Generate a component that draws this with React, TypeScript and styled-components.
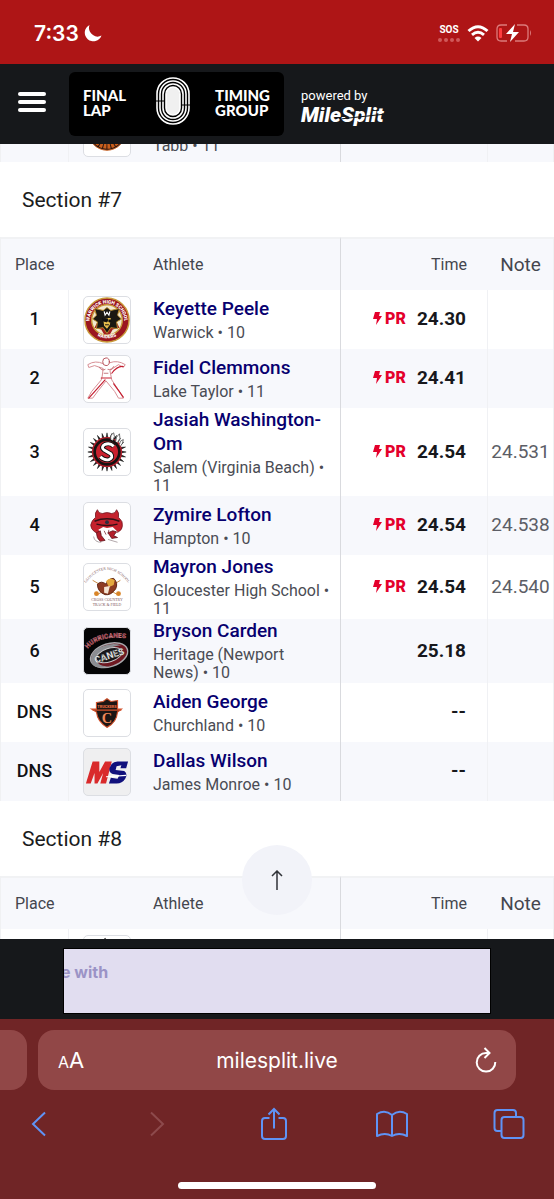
import React from "react";
import styled, { createGlobalStyle, css } from "styled-components";

const GlobalStyle = createGlobalStyle`
  *, *::before, *::after { box-sizing: border-box; }
  body { margin: 0; background: #fff; font-family: Roboto, "Liberation Sans", sans-serif; color: #1b1c20; }
  button { font: inherit; border: 0; padding: 0; background: none; color: inherit; }
`;

const Screen = styled.div`
  display: flex;
  flex-direction: column;
  height: 100vh;
  overflow: hidden;
`;

const StatusBar = styled.div`
  flex: none;
  display: flex;
  align-items: center;
  justify-content: space-between;
  height: 64px;
  padding: 2px 22px 0 34px;
  background: #ae1516;
  color: #fff;
  font-family: Inter, sans-serif;
`;

const Clock = styled.div`
  display: flex;
  align-items: center;
  gap: 5px;
  font-size: 21px;
  font-weight: 600;
`;

const Indicators = styled.div`
  display: flex;
  align-items: center;
  gap: 7px;
`;

const Sos = styled.div`
  display: flex;
  flex-direction: column;
  align-items: center;
  gap: 3px;
  font: 700 10px/10px Roboto, sans-serif;
`;

const Dots = styled.div`
  display: flex;
  gap: 2px;
`;

const Dot = styled.span`
  width: 4px;
  height: 4px;
  border-radius: 2px;
  background: #d0595a;
`;

const Header = styled.header`
  flex: none;
  display: flex;
  align-items: center;
  height: 80px;
  padding: 0 18px;
  background: #16181b;
  color: #fff;
`;

const MenuButton = styled.button`
  display: flex;
  flex-direction: column;
  gap: 4px;
  width: 28px;
  margin-right: 23px;
  padding-bottom: 4px;
`;

const MenuLine = styled.span`
  height: 4px;
  border-radius: 2px;
  background: #fff;
`;

const Brand = styled.a`
  display: flex;
  align-items: center;
  justify-content: space-between;
  width: 215px;
  height: 64px;
  padding: 0 14px;
  border-radius: 6px;
  background: #000;
  color: #fff;
  font: 900 15px/15px Lato, sans-serif;
  text-decoration: none;
`;

const BrandWord = styled.span`
  padding-bottom: 2px;
`;

const TrackSvg = styled.svg`
  margin: 0 0 6px 4px;
`;

const Powered = styled.a`
  margin-left: 17px;
  padding-top: 6px;
  color: #fff;
  font-size: 13px;
  line-height: 16px;
  text-decoration: none;
`;

const MileSplit = styled.span`
  display: block;
  position: relative;
  font-size: 21px;
  line-height: 22px;
  font-weight: 900;
  font-style: italic;

  &::after {
    content: "";
    position: absolute;
    left: 41px;
    right: 0;
    top: 12px;
    height: 1px;
    background: #16181b;
    transform: rotate(-6deg);
  }
`;

const Viewport = styled.main`
  position: relative;
  flex: 1;
  min-height: 0;
  overflow: hidden;
`;

const Scrolled = styled.div`
  margin-top: -41px;
`;

const SectionTitle = styled.h2`
  display: flex;
  align-items: center;
  height: 75px;
  margin: 0;
  padding-left: 22px;
  font-size: 21px;
  font-weight: 400;
`;

const Table = styled.table`
  width: 100%;
  table-layout: fixed;
  border-collapse: separate;
  border-spacing: 0;
  border-left: 1px solid #f0f1f3;
  border-right: 1px solid #f0f1f3;
`;

const Col = styled.col<{ $w?: number }>`
  ${(p) => p.$w && css`width: ${p.$w}px;`}
`;

const HeadCell = styled.th<{ $kind?: "time" | "note" | "place" }>`
  height: 53px;
  padding: 0;
  border-top: 2px solid #f1f2f4;
  background: #f7f8fc;
  color: #44464e;
  font-size: 16px;
  font-weight: 400;
  text-align: left;
  ${(p) => p.$kind === "place" && css`padding-left: 14px;`}
  ${(p) => p.$kind === "time" && css`text-align: right; padding-right: 21px; border-left: 1px solid #d9dade;`}
  ${(p) => p.$kind === "note" && css`text-align: center; font-size: 19px;`}
`;

const Row = styled.tr<{ $shade: boolean }>`
  background: ${(p) => (p.$shade ? "#f7f8fc" : "#fff")};
`;

const Cell = styled.td`
  height: 59px;
  padding: 0 0 2px;
  vertical-align: middle;
`;

const PlaceCell = styled(Cell)`
  border-right: 1px solid #f0f1f4;
  color: #101114;
  font-size: 18px;
  font-weight: 500;
  text-align: center;
`;

const LogoCell = styled(Cell)`
  padding: 0 0 0 14px;
`;

const AthleteCell = styled(Cell)`
  padding: 0 8px 0 0;
`;

const Athlete = styled.a`
  display: block;
  color: #07006f;
  font-size: 19px;
  line-height: 24px;
  font-weight: 500;
  text-decoration: none;
`;

const School = styled.div`
  padding: 3px 0 1px;
  color: #4a4c54;
  font-size: 16px;
  line-height: 18px;
`;

const TimeCell = styled(Cell)`
  padding-right: 21px;
  border-left: 1px solid #d9dade;
  border-right: 1px solid #f0f1f4;
  color: #17181c;
  font-size: 19px;
  font-weight: 700;
  text-align: right;
`;

const Result = styled.div`
  display: flex;
  align-items: center;
  justify-content: flex-end;
  gap: 11px;
`;

const Badge = styled.span`
  display: flex;
  align-items: center;
  gap: 3px;
  color: #e4002b;
  font-size: 16px;
  font-weight: 900;
`;

const NoteCell = styled(Cell)`
  color: #5c5e66;
  font-size: 19px;
  text-align: center;
`;

const LogoFrame = styled.div<{ $bg?: string }>`
  width: 48px;
  height: 48px;
  overflow: hidden;
  border: 1px solid #dcdee3;
  border-radius: 5px;
  background: ${(p) => p.$bg || "#fff"};

  svg { display: block; width: 100%; height: 100%; }
`;

const TopButton = styled.button`
  position: absolute;
  bottom: 24px;
  left: calc(50% - 35px);
  display: flex;
  align-items: center;
  justify-content: center;
  width: 70px;
  height: 70px;
  border-radius: 35px;
  background: #f2f3f9;
`;

const AdBar = styled.aside`
  flex: none;
  padding: 10px 64px 6px;
  background: #16181b;
`;

const Ad = styled.div`
  height: 64px;
  overflow: hidden;
  outline: 1px solid #000;
  background: #e1ddf0;
  color: #9b93c6;
  font: 700 16px/46px Inter, sans-serif;
  text-indent: -3px;
`;

const Browser = styled.footer`
  flex: none;
  display: flex;
  flex-direction: column;
  height: 180px;
  padding-top: 11px;
  background: #702526;
`;

const Tabs = styled.div`
  display: flex;
  gap: 11px;
  height: 60px;
  padding-right: 38px;
`;

const PreviousTab = styled.button`
  width: 27px;
  border-radius: 0 16px 16px 0;
  background: #914747;
`;

const Address = styled.div`
  flex: 1;
  display: flex;
  align-items: center;
  padding: 0 8px 0 20px;
  border-radius: 16px;
  background: #914747;
  color: #fff;
  font-family: Inter, sans-serif;
`;

const TextSize = styled.button`
  display: flex;
  align-items: baseline;
  width: 32px;
  font-size: 22px;
`;

const SmallA = styled.span`
  font-size: 16px;
`;

const Url = styled.input`
  flex: 1;
  min-width: 0;
  padding: 0;
  border: 0;
  outline: 0;
  background: none;
  color: #fff;
  font: 400 21px Inter, sans-serif;
  text-align: center;
`;

const Tools = styled.nav`
  display: flex;
  justify-content: space-between;
  padding: 12px 23px 0 17px;
`;

const Tool = styled.button`
  display: flex;
  align-items: center;
  justify-content: center;
  width: 44px;
  height: 44px;
  color: #5f93f5;

  &:disabled { color: #8d4a4c; }
`;

const HomeBar = styled.div`
  align-self: center;
  width: 198px;
  height: 7px;
  margin: auto 0 10px;
  border-radius: 4px;
  background: #fff;
`;

/* School crests, each on a 48 by 48 canvas */

function Warwick() {
  return (
    <svg viewBox="0 0 48 48" aria-hidden="true">
      <defs>
        <path id="warwick-top" d="M8 33A18 18 0 1 1 40 33" />
        <path id="warwick-bottom" d="M10 38A22 22 0 0 0 38 38" />
      </defs>
      <circle cx="24" cy="24" r="23" fill="#9b1620" stroke="#c99a3a" strokeWidth="1.500" />
      <circle cx="24" cy="24" r="16" fill="#f2ead2" stroke="#c99a3a" strokeWidth="1.500" />
      <path d="M12 15h24l-3 9 4 8-7 2-3 5h-6l-3-5-7-2 4-8z" fill="#a3211f" />
      <path d="M24 11l4 3 9-2-2 7 4 4-5 3 1 7-7-1-4 6-4-6-7 1 1-7-5-3 4-4-2-7 9 2z" fill="#1b1812" stroke="#b98a2e" strokeWidth="1" />
      <path d="M20 22h8l-1 7-3 4-3-3z" fill="#e9bf4d" />
      <path d="M19 22l6 1-1 3-4-1zM26 24h2v2h-2zM22 29h4" fill="#111" stroke="#111" />
      <path d="M21 15l1 4 2-3 2 3 1-4" fill="none" stroke="#fff" strokeWidth="1.200" />
      <text fill="#fff" fontFamily="Roboto" fontWeight="900" fontSize="5"><textPath href="#warwick-top" startOffset="50%" textAnchor="middle">WARWICK HIGH SCHOOL</textPath></text>
      <text fill="#fff" fontFamily="Roboto" fontWeight="900" fontSize="5"><textPath href="#warwick-bottom" startOffset="50%" textAnchor="middle">RAIDERS</textPath></text>
    </svg>
  );
}

function LakeTaylor() {
  return (
    <svg viewBox="0 0 48 48" aria-hidden="true" fill="none" strokeLinejoin="round" strokeLinecap="round">
      <path d="M20 8Q12 4 4 9l1 3 6-2 9 3-1 8-1 4L8 37l-4 7h5l6-8 8-10 9 11 4 7h5l-4-7-8-12-2-10 9-6 5 3 2-3q-8-5-16-2l-4 1" stroke="#d58b91" strokeWidth="1" />
      <path d="M29 18q6-8 12-7M22 25Q14 34 5 44M31 29l10 14M18 23h10" stroke="#c51f31" strokeWidth="1.200" />
      <ellipse cx="23" cy="6" rx="3.500" ry="4" fill="#fff" stroke="#b6525b" />
      <path d="M16 12q3 4 6 2M25 14q4 1 6-3M21 18h4" stroke="#b6525b" strokeWidth=".8" />
    </svg>
  );
}

function Salem() {
  const spikes = Array.from({ length: 24 }, (_, i) => i * 15);
  return (
    <svg viewBox="0 0 48 48" aria-hidden="true">
      {spikes.map((a) => (
        <path key={a} d="M22.800 10L24 4l1.200 6z" fill="#111" stroke="#111" strokeWidth=".5" transform={`rotate(${a} 24 24)`} />
      ))}
      <circle cx="24" cy="24" r="15" fill="#161212" stroke="#b51f2c" strokeWidth="1.500" />
      <circle cx="24" cy="24" r="11.500" fill="#c9202e" />
      <path d="M31 18q-4-4-9-2-5 3-1 6l7 4q3 4-2 6-5 1-9-3" fill="none" stroke="#111" strokeWidth="5" />
      <path d="M31 18q-4-4-9-2-5 3-1 6l7 4q3 4-2 6-5 1-9-3" fill="none" stroke="#fff" strokeWidth="3" />
      <path d="M28 11q-1-5 3-7 2 4-1 8M33 13q0-5 4-8 2 5-2 9M37 16q0-4 4-5 0 4-3 7" fill="#fff" stroke="#444" strokeWidth=".8" />
    </svg>
  );
}

function Hampton() {
  return (
    <svg viewBox="0 0 48 48" aria-hidden="true">
      <path d="M12 15q-1-5 2-8 1 4 5 4 5-2 10 0 4 0 5-4 3 3 2 8 5 4 4 9 0 4-4 6-5 3-9 1-5-2-8 1-5 1-8-2-4-3-4-7 1-5 5-8z" fill="#c4222d" stroke="#6e1620" strokeWidth=".8" />
      <path d="M11 19q13-5 26 0M13 22q11 3 22 0" fill="none" stroke="#2e1116" strokeWidth="1.500" />
      <path d="M15 28l5-3 4 1 6-1 5 5-4 4-6-2-5 3z" fill="#fff" />
      <path d="M13 31l4-2 1 5 4 5-5 1q-4-3-4-9zM25 31l5-2 4 1-3 4 4 2-6 1z" fill="#b31f2b" stroke="#5c141c" strokeWidth=".8" />
      <path d="M21 29l2 4M26 28l-1 4" stroke="#7c2a33" strokeWidth=".8" />
      <circle cx="24" cy="20" r="2" fill="#2b3040" />
      <path d="M10 35q1 6 8 6M25 38l10 3" fill="none" stroke="#9a8d91" strokeWidth=".8" />
    </svg>
  );
}

function Gloucester() {
  return (
    <svg viewBox="0 0 48 48" aria-hidden="true">
      <defs><path id="gloucester-arc" d="M1 21Q24-9 47 21" /></defs>
      <text fill="#7b5357" fontFamily="Liberation Serif" fontSize="4"><textPath href="#gloucester-arc" startOffset="50%" textAnchor="middle">GLOUCESTER HIGH SCHOOL</textPath></text>
      <path d="M9 17l26 15M38 17L14 32" stroke="#c98b45" strokeWidth="1" />
      <path d="M14 21q4-4 9 0 2-6 8-6 5 5 2 11-5 7-11 6-8-3-8-11z" fill="#8e3c22" stroke="#5f2412" />
      <path d="M23 18q4-5 9-1l-1 5-5 2z" fill="#e4a93f" />
      <path d="M21 24l6-1-2 8-4-1z" fill="#f5e4d2" />
      <circle cx="13" cy="31" r="2.500" fill="#d98427" /><circle cx="36" cy="31" r="2.500" fill="#d98427" />
      <text x="24" y="39" textAnchor="middle" fill="#7b5357" fontFamily="Liberation Serif" fontSize="4">CROSS COUNTRY</text>
      <text x="24" y="44" textAnchor="middle" fill="#7b5357" fontFamily="Liberation Serif" fontSize="4">TRACK &amp; FIELD</text>
    </svg>
  );
}

function Heritage() {
  return (
    <svg viewBox="0 0 48 48" aria-hidden="true">
      <g transform="rotate(-18 24 28)">
        <ellipse cx="26" cy="29" rx="20" ry="12" fill="#6f1922" stroke="#a9a9ad" strokeWidth="1.500" />
        <path d="M6 30Q8 18 24 18q10 0 17 5-10-2-20 0-9 2-9 8 0 7 12 9Q7 40 6 30z" fill="#8b8d92" />
        <ellipse cx="26" cy="29" rx="14" ry="7" fill="#17171a" stroke="#c9c9cc" />
        <text x="26" y="33" textAnchor="middle" fill="#eee" stroke="#333" strokeWidth=".3" fontFamily="Roboto" fontWeight="900" fontSize="10">CANES</text>
      </g>
      <path id="heritage-arc" d="M4 22Q15 7 46 11" fill="none" />
      <text fill="#a33a46" stroke="#d9a9ae" strokeWidth=".2" fontFamily="Roboto" fontWeight="900" fontSize="7"><textPath href="#heritage-arc">HURRICANES</textPath></text>
    </svg>
  );
}

function Churchland() {
  return (
    <svg viewBox="0 0 48 48" aria-hidden="true">
      <path d="M13 13l7-1 4-3 4 3 7-1v9h4l-4 3q-1 11-11 16Q14 33 13 23l-5-3h5z" fill="#1c1614" stroke="#d1502a" strokeWidth="1.200" />
      <path d="M9 21h30" stroke="#d1502a" strokeWidth="1.500" />
      <text x="24" y="18.500" textAnchor="middle" fill="#e0673f" fontFamily="Roboto" fontWeight="900" fontSize="4">TRUCKERS</text>
      <text x="24" y="34" textAnchor="middle" fill="#ee8858" fontFamily="Liberation Serif" fontWeight="700" fontSize="15">C</text>
    </svg>
  );
}

function JamesMonroe() {
  return (
    <svg viewBox="0 0 48 48" aria-hidden="true">
      <path d="M2 36L9 13h7l0 11 6-11h7l-6 23h-6l3-11-6 11h-3l0-11-4 11z" fill="#d92a2b" />
      <path d="M46 13l-2 7h-6l1-3-5 1-1 4 9 1q4 3 1 8-3 5-9 5h-8l2-6 7 1 2-4-7-1q-5-2-3-7 2-6 8-6z" fill="#10107c" />
      <path d="M23 29l21-1.500" stroke="#fff" strokeWidth="1.200" />
    </svg>
  );
}

function Tabb() {
  return (
    <svg viewBox="0 0 48 48" aria-hidden="true">
      <circle cx="24" cy="23" r="19" fill="#2a1712" />
      <circle cx="24" cy="23" r="15" fill="none" stroke="#c95f1d" strokeWidth="5" strokeDasharray="3 1" />
      <circle cx="24" cy="23" r="19" fill="none" stroke="#c95f1d" />
    </svg>
  );
}

function Plain() {
  return (
    <svg viewBox="0 0 48 48" aria-hidden="true">
      <path d="M18 7l4-4 4 4" fill="none" stroke="#333" strokeWidth="1.500" />
    </svg>
  );
}

type Entry = {
  place: string;
  name: string;
  school: string;
  time: string;
  pr?: boolean;
  note?: string;
  logo: React.ReactNode;
  logoBg?: string;
};

const section7: Entry[] = [
  { place: "1", name: "Keyette Peele", school: "Warwick • 10", time: "24.30", pr: true, logo: <Warwick /> },
  { place: "2", name: "Fidel Clemmons", school: "Lake Taylor • 11", time: "24.41", pr: true, logo: <LakeTaylor /> },
  { place: "3", name: "Jasiah Washington-Om", school: "Salem (Virginia Beach) • 11", time: "24.54", pr: true, note: "24.531", logo: <Salem /> },
  { place: "4", name: "Zymire Lofton", school: "Hampton • 10", time: "24.54", pr: true, note: "24.538", logo: <Hampton /> },
  { place: "5", name: "Mayron Jones", school: "Gloucester High School • 11", time: "24.54", pr: true, note: "24.540", logo: <Gloucester /> },
  { place: "6", name: "Bryson Carden", school: "Heritage (Newport News) • 10", time: "25.18", logo: <Heritage />, logoBg: "#050506" },
  { place: "DNS", name: "Aiden George", school: "Churchland • 10", time: "--", logo: <Churchland /> },
  { place: "DNS", name: "Dallas Wilson", school: "James Monroe • 10", time: "--", logo: <JamesMonroe />, logoBg: "#efeff0" },
];

const section6: Entry[] = [
  { place: "", name: "", school: "Tabb • 11", time: "", logo: <Tabb /> },
];

const section8: Entry[] = [
  { place: "", name: "", school: "", time: "", logo: <Plain /> },
];

function Results({ entries, head = true, shadeFrom = 1 }: { entries: Entry[]; head?: boolean; shadeFrom?: number }) {
  return (
    <Table>
      <colgroup>
        <Col $w={68} />
        <Col $w={84} />
        <Col />
        <Col $w={148} />
        <Col $w={65} />
      </colgroup>
      {head && (
        <thead>
          <tr>
            <HeadCell $kind="place">Place</HeadCell>
            <HeadCell />
            <HeadCell>Athlete</HeadCell>
            <HeadCell $kind="time">Time</HeadCell>
            <HeadCell $kind="note">Note</HeadCell>
          </tr>
        </thead>
      )}
      <tbody>
        {entries.map((e, i) => (
          <Row key={i} $shade={i % 2 === shadeFrom}>
            <PlaceCell>{e.place}</PlaceCell>
            <LogoCell><LogoFrame $bg={e.logoBg}>{e.logo}</LogoFrame></LogoCell>
            <AthleteCell>
              <Athlete href="#">{e.name || "\u00a0"}</Athlete>
              <School>{e.school}</School>
            </AthleteCell>
            <TimeCell>
              <Result>
                {e.pr && (
                  <Badge>
                    <svg width="9" height="13" viewBox="0 0 9 13" aria-hidden="true"><path d="M2 0h5L6 4h3L3 13l1-6H0z" fill="currentColor" /></svg>
                    PR
                  </Badge>
                )}
                {e.time}
              </Result>
            </TimeCell>
            <NoteCell>{e.note}</NoteCell>
          </Row>
        ))}
      </tbody>
    </Table>
  );
}

export default function App() {
  return (
    <Screen>
      <GlobalStyle />
      <StatusBar>
        <Clock>
          7:33
          <svg width="18" height="18" viewBox="0 0 18 18" aria-hidden="true"><path d="M5.500 1A8.600 8.600 0 1 0 17.500 11.500Q13 14 9 11 3.500 7 5.500 1z" fill="#fff" /></svg>
        </Clock>
        <Indicators>
          <Sos>
            SOS
            <Dots><Dot /><Dot /><Dot /><Dot /></Dots>
          </Sos>
          <svg width="22" height="17" viewBox="0 0 22 17" aria-hidden="true" fill="none" stroke="#fff" strokeWidth="3">
            <path d="M1.500 6Q11-2.500 20.500 6M5 9.800q6-5 12 0" />
            <path d="M11 16.500l-3.500-3.600q3.500-2.600 7 0z" fill="#fff" stroke="none" />
          </svg>
          <svg width="36" height="18" viewBox="0 0 36 18" aria-hidden="true">
            <path d="M11 1H5Q1 1 1 5v8q0 4 4 4h6M21 1h7q4 0 4 4v8q0 4-4 4h-9" fill="none" stroke="#dc7b7b" strokeWidth="1.300" />
            <path d="M34 6q2 3 0 6z" fill="#dc7b7b" />
            <rect x="3" y="4" width="3" height="10" rx="1" fill="#ff3b3e" />
            <path d="M19 0l-9 10h6l-2 8 9-10h-6z" fill="#fff" />
          </svg>
        </Indicators>
      </StatusBar>

      <Header>
        <MenuButton aria-label="Menu"><MenuLine /><MenuLine /><MenuLine /></MenuButton>
        <Brand href="#">
          <BrandWord>FINAL<br />LAP</BrandWord>
          <TrackSvg width="34" height="48" viewBox="0 0 34 48" aria-hidden="true" fill="none" stroke="#fff" strokeWidth="1.600">
            <rect x="1" y="1" width="32" height="46" rx="16" />
            <rect x="4" y="4" width="26" height="40" rx="13" />
            <rect x="7" y="7" width="20" height="34" rx="10" />
            <rect x="10" y="10" width="14" height="28" rx="7" fill="#f0f0f0" />
            <path d="M0 24h8M26 28h8" stroke="#000" strokeWidth="1.200" />
          </TrackSvg>
          <BrandWord>TIMING<br />GROUP</BrandWord>
        </Brand>
        <Powered href="#">
          powered by
          <MileSplit>MileSplit</MileSplit>
        </Powered>
      </Header>

      <Viewport>
        <Scrolled>
          <Results entries={section6} head={false} shadeFrom={0} />
          <SectionTitle>Section #7</SectionTitle>
          <Results entries={section7} />
          <SectionTitle>Section #8</SectionTitle>
          <Results entries={section8} />
        </Scrolled>
        <TopButton aria-label="Back to top">
          <svg width="12" height="20" viewBox="0 0 12 20" aria-hidden="true" fill="none" stroke="#303238" strokeWidth="1.500"><path d="M6 20V1M1 6l5-5 5 5" /></svg>
        </TopButton>
      </Viewport>

      <AdBar><Ad>e with</Ad></AdBar>

      <Browser>
        <Tabs>
          <PreviousTab aria-label="Previous tab" />
          <Address>
            <TextSize aria-label="Text size"><SmallA>A</SmallA>A</TextSize>
            <Url aria-label="Address" readOnly value="milesplit.live" />
            <Tool aria-label="Reload">
              <svg width="22" height="26" viewBox="0 0 22 26" aria-hidden="true" fill="none" stroke="#fff" strokeWidth="2"><path d="M14 6H11A9.300 9.300 0 1 0 20.300 15M9.500 1l5 5-5 5" /></svg>
            </Tool>
          </Address>
        </Tabs>
        <Tools>
          <Tool aria-label="Back"><svg width="16" height="26" viewBox="0 0 16 26" fill="none" stroke="currentColor" strokeWidth="2"><path d="M14 1.500L2 13l12 11.500" /></svg></Tool>
          <Tool aria-label="Forward" disabled><svg width="16" height="26" viewBox="0 0 16 26" fill="none" stroke="currentColor" strokeWidth="2"><path d="M2 1.500L14 13 2 24.500" /></svg></Tool>
          <Tool aria-label="Share"><svg width="28" height="34" viewBox="0 0 28 34" fill="none" stroke="currentColor" strokeWidth="2"><path d="M9.500 11H5q-3 0-3 3v15q0 3 3 3h18q3 0 3-3V14q0-3-3-3h-4.500M14 21.500V2M8.500 7.500L14 2l5.500 5.500" /></svg></Tool>
          <Tool aria-label="Bookmarks"><svg width="34" height="28" viewBox="0 0 34 28" fill="none" stroke="currentColor" strokeWidth="2" strokeLinejoin="round"><path d="M17 5Q10-1 2 4v22q8-4 15 0 7-4 15 0V4Q24-1 17 5zM17 5v21" /></svg></Tool>
          <Tool aria-label="Tabs"><svg width="32" height="32" viewBox="0 0 32 32" fill="none" stroke="currentColor" strokeWidth="2"><rect x="8.500" y="9" width="22" height="21" rx="3" /><path d="M8 23H4.500q-3 0-3-3V5q0-3 3-3H20q3 0 3 3v3.500" /></svg></Tool>
        </Tools>
        <HomeBar />
      </Browser>
    </Screen>
  );
}
